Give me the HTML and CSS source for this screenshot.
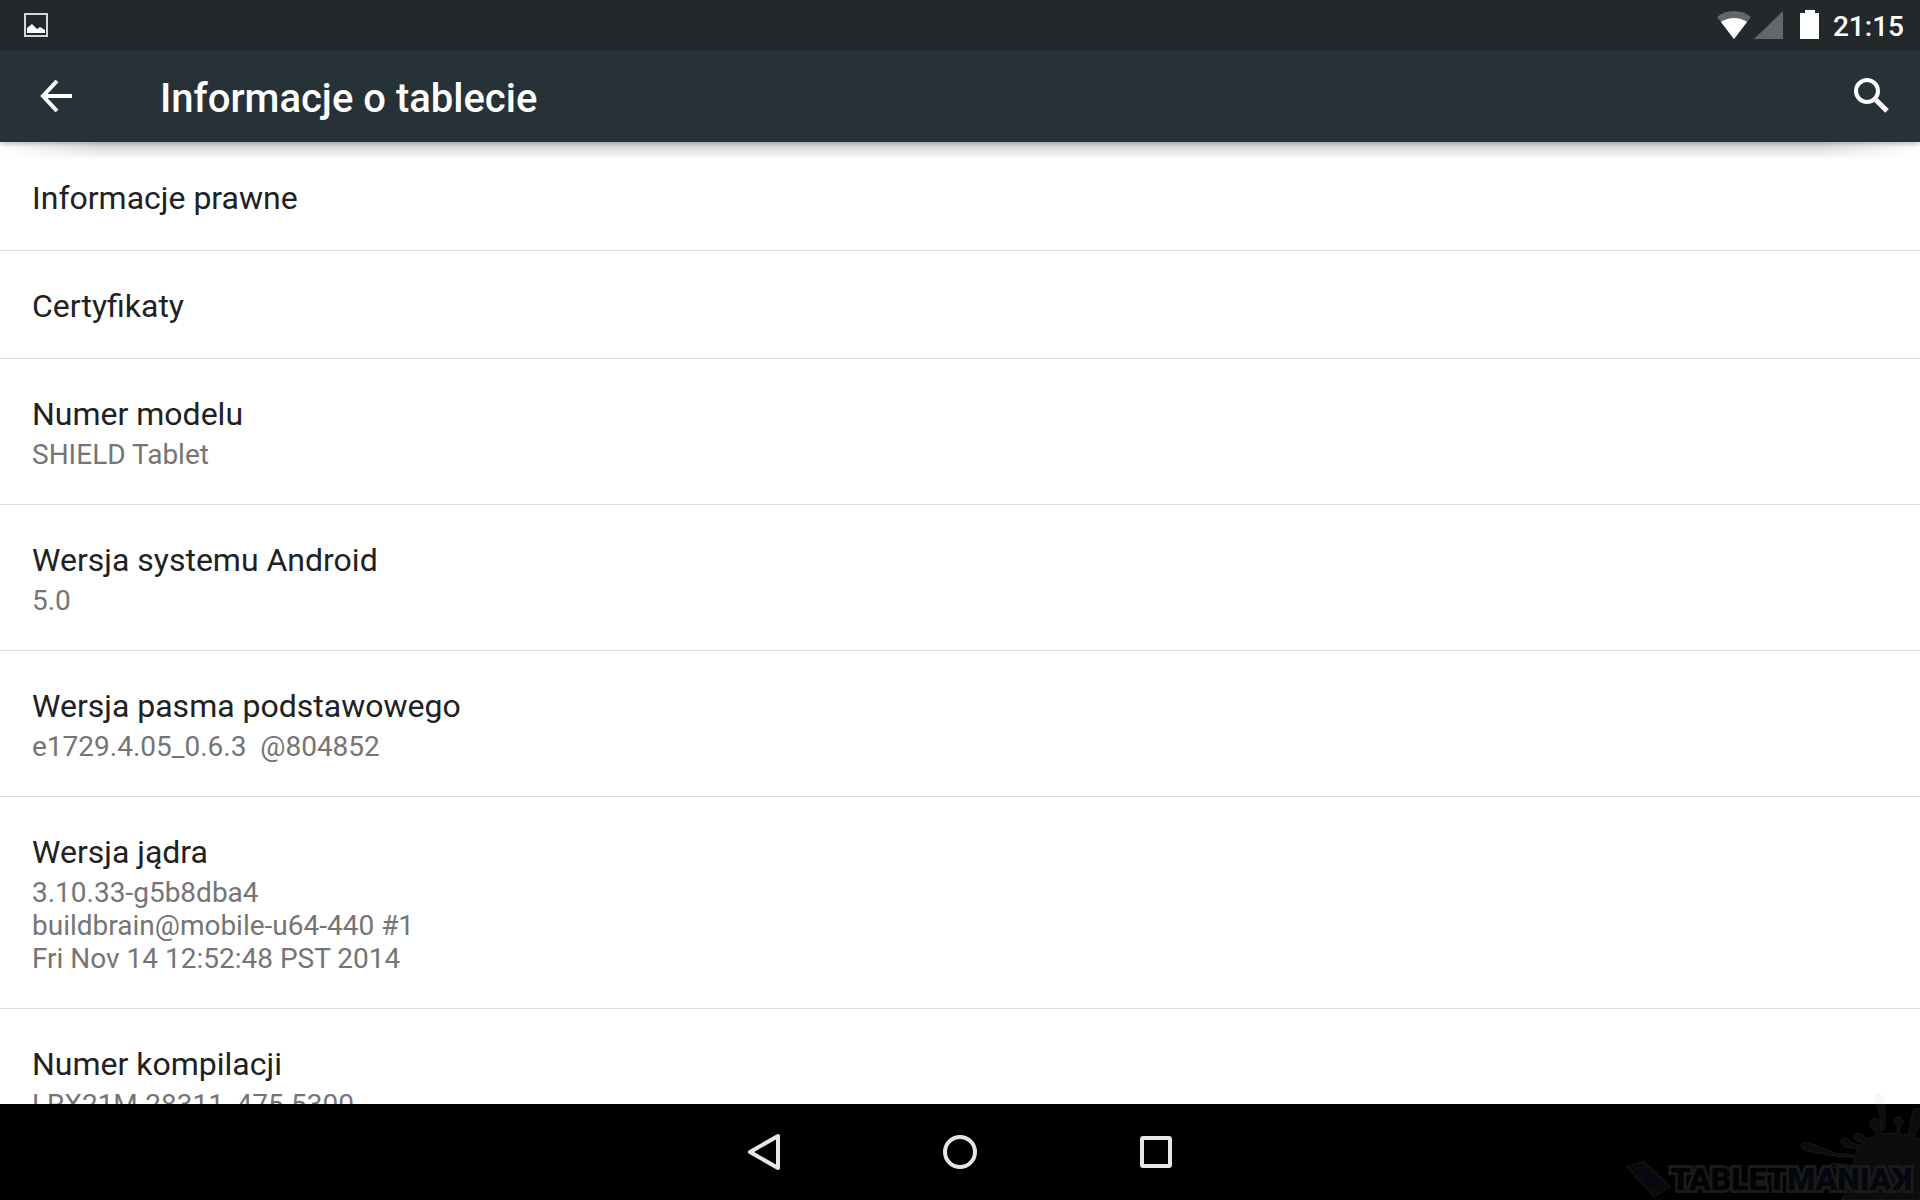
FILE: index.html
```
<!DOCTYPE html>
<html lang="pl">

<head>
    <meta charset="UTF-8">
    <meta name="viewport" content="width=device-width, initial-scale=1.0">
    <title>Informacje o tablecie</title>
    <link rel="stylesheet" href="styles.css">
</head>

<body>
    <!-- Status bar -->
    <div class="status-bar">
        <svg width="24" height="24" viewBox="0 0 24 24">
            <rect x="1" y="1" width="22" height="22" fill="none" stroke="#d5d8d8" stroke-width="2" />
            <path d="M3 20v-5l5-4 5 5 3-2 5 3v3z" fill="#fff" />
        </svg>
        <div class="status-icons">
            <svg width="36" height="30" viewBox="0 0 36 30">
                <path d="M18 29L1 7Q8 1 18 1t17 6z" fill="#646769" />
                <path d="M18 29L5 12q6-4 13-4t13 4z" fill="#fff" />
            </svg>
            <svg class="signal-icon" width="30" height="30" viewBox="0 0 30 30">
                <path d="M29 1v28H0z" fill="#646769" />
            </svg>
            <svg class="battery-icon" width="20" height="30" viewBox="0 0 20 30">
                <path d="M5 0h10v3h4v26H0V3h5z" fill="#fff" />
            </svg>
            <span class="clock">21:15</span>
        </div>
    </div>

    <header>
        <button type="button" aria-label="Wstecz">
            <svg width="32" height="32" viewBox="0 0 32 32">
                <path d="M17 1L3 16l14 15M3 16h29" fill="none" stroke="#fff" stroke-width="4" />
            </svg>
        </button>
        <h1>Informacje o tablecie</h1>
        <button type="button" aria-label="Szukaj">
            <svg width="36" height="36" viewBox="0 0 36 36">
                <circle cx="13" cy="13" r="11" fill="none" stroke="#fff" stroke-width="4" />
                <path d="M22 22l11 11" stroke="#fff" stroke-width="5" />
            </svg>
        </button>
    </header>

    <main>
        <ul class="settings-list">
            <li>
                <h2>Informacje prawne</h2>
            </li>
            <li>
                <h2>Certyfikaty</h2>
            </li>
            <li>
                <h2>Numer modelu</h2>
                <p>SHIELD Tablet</p>
            </li>
            <li>
                <h2>Wersja systemu Android</h2>
                <p>5.0</p>
            </li>
            <li>
                <h2>Wersja pasma podstawowego</h2>
                <p>e1729.4.05_0.6.3  @804852</p>
            </li>
            <li>
                <h2>Wersja jądra</h2>
                <p>3.10.33-g5b8dba4<br>buildbrain@mobile-u64-440 #1<br>Fri Nov 14 12:52:48 PST 2014</p>
            </li>
            <li>
                <h2>Numer kompilacji</h2>
                <p>LRX21M.28311_475.5300</p>
            </li>
        </ul>
    </main>

    <!-- Navigation bar -->
    <nav>
        <button type="button" aria-label="Wstecz">
            <svg width="36" height="40" viewBox="0 0 36 40">
                <path d="M32 4v32L4 20z" />
            </svg>
        </button>
        <button type="button" aria-label="Ekran główny">
            <svg width="36" height="40" viewBox="0 0 36 40">
                <circle cx="18" cy="20" r="15" />
            </svg>
        </button>
        <button type="button" aria-label="Ostatnie">
            <svg width="36" height="40" viewBox="0 0 36 40">
                <rect x="4" y="6" width="28" height="28" rx="1" />
            </svg>
        </button>
    </nav>

    <!-- Watermark -->
    <div class="watermark">
        <svg class="splash" width="140" height="115" viewBox="0 0 420 345">
            <path class="drop" d="M286 30q10-10 20 6 12 32 10 64l-2 36h-8l-8-50q-16-40-12-56z" />
            <path d="M420 345H185q14-30 35-50v-40l-66-8q-10-14 14-12l52 8 4-26-60-4-86-16q-22-8-12-22 14-8 32 2l68 28 60 6 6-20-38-6q-18-12-8-24 20-6 28 12l26 8 14-10q-28-2-32-14 2-18 22-10l16 14 24-6 8-18q-22-4-22-24 6-18 24-10 14 10 6 40l14 2 26 0 10-2 4-18q-16-14-8-26 14-10 22 6 4 12-8 22l-4 20 30 2 8-46 8-32h22v40l-24 44 28 12z" />
        </svg>
        <div class="watermark-name">
            <svg width="44" height="38" viewBox="0 0 44 38">
                <path d="M1 7L17 2l26 25-16 9z" fill="#0a0a0c" stroke="#191919" stroke-width="2" />
                <path d="M8 9l9-3 18 18-9 5z" fill="#060912" />
            </svg>
            <span>TABLET<b>MANIA<i>K</i></b></span>
        </div>
    </div>
</body>

</html>
```
FILE: styles.css
```
/* Global styles */
* {
    padding: 0;
    margin: 0;
    box-sizing: border-box;
}

body {
    font-family: Roboto, sans-serif;
    background-color: #fff;
    color: #212121;
    display: flex;
    flex-direction: column;
    position: relative;
    height: 100vh;
    overflow: hidden;
}

svg {
    display: block;
}

button {
    background: none;
    border: none;
    cursor: pointer;
}

/* Status bar */
.status-bar {
    flex: none;
    display: flex;
    justify-content: space-between;
    align-items: center;
    height: 50px;
    padding: 0 16px 0 24px;
    background-color: #23282b;
}

.status-icons {
    display: flex;
    align-items: center;
}

.signal-icon {
    margin-left: 2px;
}

.battery-icon {
    margin: 0 13px 0 16px;
}

.clock {
    color: #fff;
    font-size: 28px;
    font-weight: 500;
    line-height: 34px;
    padding-top: 3px;
}

/* Title bar */
header {
    flex: none;
    position: relative;
    display: flex;
    align-items: center;
    height: 92px;
    padding: 0 30px 0 40px;
    background-color: #273238;
    box-shadow: 0 2px 5px rgba(0, 0, 0, 0.25);
}

/* Soft shadow that fades out towards the corners */
header::after {
    content: "";
    position: absolute;
    top: 100%;
    left: 0;
    right: 0;
    height: 18px;
    background: linear-gradient(rgba(0, 0, 0, 0.14), rgba(0, 0, 0, 0.12) 40%, transparent);
    mask-image: linear-gradient(to right, transparent, #000 100px, #000 calc(100% - 100px), transparent);
}

h1 {
    flex: 1;
    margin-left: 88px;
    padding-top: 4px;
    color: #fff;
    font-size: 40px;
    font-weight: 500;
}

/* Settings list */
main {
    flex: 1;
    min-height: 0;
    padding-top: 1px;
    overflow: hidden;
}

.settings-list {
    list-style: none;
}

.settings-list li {
    padding: 36px 32px 33px;
    border-bottom: 1px solid #dcdcdc;
}

.settings-list h2 {
    font-size: 32px;
    font-weight: 400;
    line-height: 38px;
}

.settings-list p {
    margin-top: 5px;
    color: #757575;
    font-size: 28px;
    line-height: 33px;
    white-space: pre;
}

/* Navigation bar */
nav {
    flex: none;
    display: flex;
    justify-content: center;
    align-items: center;
    gap: 160px;
    height: 96px;
    background-color: #000;
}

nav svg {
    fill: none;
    stroke: #e6e6e6;
    stroke-width: 4;
    stroke-linejoin: round;
}

/* Watermark */
.watermark {
    position: absolute;
    right: 0;
    bottom: 0;
    pointer-events: none;
}

.splash {
    margin-left: auto;
    fill: #0c0c0c;
    stroke: #1a1a1a;
    stroke-width: 3;
    stroke-linejoin: round;
}

.splash .drop {
    fill: rgba(160, 160, 160, 0.08);
    stroke: rgba(160, 160, 160, 0.08);
}

.watermark-name {
    position: absolute;
    right: 8px;
    bottom: 2px;
    display: flex;
    align-items: center;
    color: #030303;
    font-size: 32px;
    font-weight: 900;
    line-height: 36px;
    white-space: nowrap;
    paint-order: stroke fill;
    -webkit-text-stroke: 6px #1a1a1a;
}

.watermark-name b {
    color: #04070e;
    font-weight: 900;
}

.watermark-name i {
    display: inline-block;
    font-style: normal;
    transform: rotate(180deg);
}
```
